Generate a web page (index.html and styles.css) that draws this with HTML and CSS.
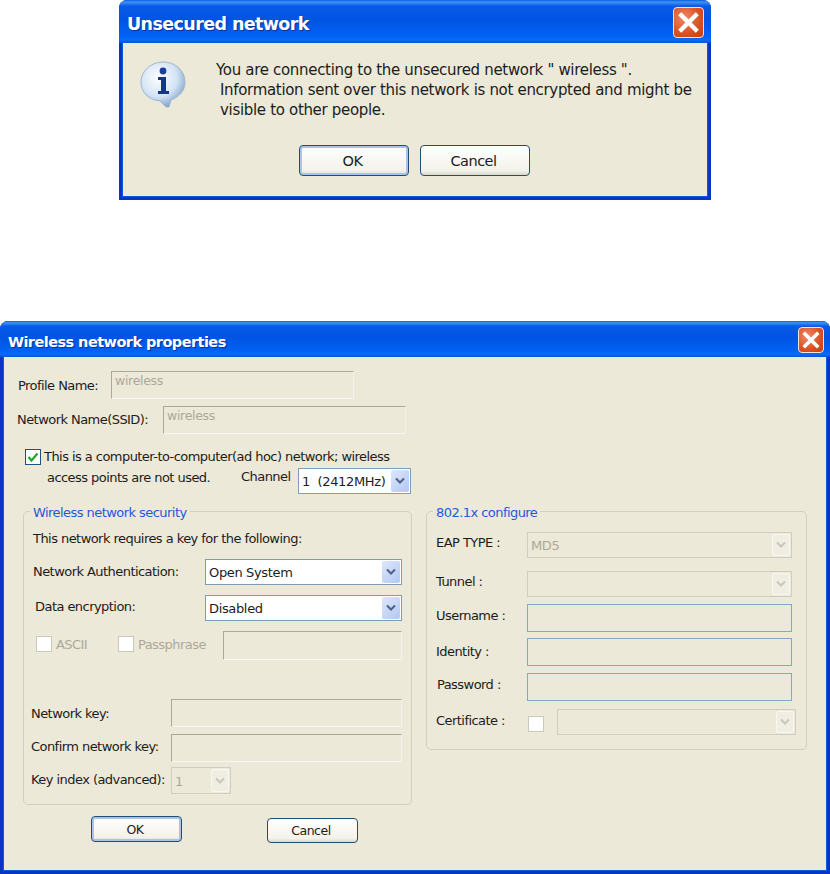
FILE: index.html
```html
<!DOCTYPE html>
<html lang="en">
<head>
  <meta charset="UTF-8" />
  <title>Wireless network dialogs</title>
  <link rel="stylesheet" href="styles.css">
</head>
<body>
  <!-- first dialog -->
  <div class="window alert">
    <div class="titlebar">
      <span class="title">Unsecured network</span>
      <div class="close"><svg viewBox="0 0 20 20"><path d="M5 5L15 15M15 5L5 15" stroke="#fff" stroke-width="3" stroke-linecap="square"/></svg></div>
    </div>
    <div class="alert-body">
      <div class="alert-main">
        <svg class="info-icon" width="50" height="50" viewBox="0 0 50 50">
          <defs>
            <radialGradient id="bubble" cx="40%" cy="35%" r="70%">
              <stop offset="0" stop-color="#ffffff"/>
              <stop offset="0.6" stop-color="#d3e3f5"/>
              <stop offset="1" stop-color="#7d9ec6"/>
            </radialGradient>
          </defs>
          <path d="M24 2C36 2 46 10 46 22C46 31 40 37 32 40L30 47L27 47L21 41C10 40 2 33 2 22C2 11 12 2 24 2Z" fill="url(#bubble)" stroke="#9fb6d2" stroke-width="1"/>
          <circle cx="24" cy="11" r="3.4" fill="#1a3f9c"/>
          <path d="M19 17H27V31H30V34H19V31H22V20H19Z" fill="#14358e"/>
        </svg>
        <div class="alert-text">
          <div class="alert-line1">You are connecting to the unsecured network " wireless ".</div>
          <div class="alert-line2">Information sent over this network is not encrypted and might be</div>
          <div class="alert-line2">visible to other people.</div>
        </div>
      </div>
      <div class="alert-buttons">
        <button class="btn btn-default btn-big">OK</button>
        <button class="btn btn-big">Cancel</button>
      </div>
    </div>
  </div>

  <!-- second dialog -->
  <div class="window props">
    <div class="titlebar">
      <span class="title">Wireless network properties</span>
      <div class="close"><svg viewBox="0 0 20 20"><path d="M5 5L15 15M15 5L5 15" stroke="#fff" stroke-width="3" stroke-linecap="square"/></svg></div>
    </div>
    <div class="props-body">
      <div class="row row-profile">
        <label class="lbl lbl-profile">Profile Name:</label>
        <input class="box box-top" disabled value="wireless">
      </div>
      <div class="row row-ssid">
        <label class="lbl lbl-ssid">Network Name(SSID):</label>
        <input class="box box-top" disabled value="wireless">
      </div>
      <div class="adhoc">
        <div class="check check-on"><svg width="12" height="12" viewBox="0 0 12 12"><path d="M1.5 6L4.5 9.5L10.5 2.5" fill="none" stroke="#22a52e" stroke-width="2.2"/></svg></div>
        <div class="adhoc-text">
          <div>This is a computer-to-computer(ad hoc) network; wireless</div>
          <div class="adhoc-second">
            <span class="adhoc-note">access points are not used.</span>
            <span class="channel-lbl">Channel</span>
            <div class="select select-channel"><span>1&nbsp; (2412MHz)</span><div class="arrow"><svg width="12" height="8" viewBox="0 0 12 8"><path d="M2 1.5L6 5.5L10 1.5" fill="none" stroke="#4d6185" stroke-width="2"/></svg></div></div>
          </div>
        </div>
      </div>

      <div class="groups">
        <div class="group group-security">
          <div class="legend">Wireless network security</div>
          <div class="sec-intro">This network requires a key for the following:</div>
          <div class="row row-auth">
            <label class="lbl lbl-auth">Network Authentication:</label>
            <div class="select select-wide"><span>Open System</span><div class="arrow"><svg width="12" height="8" viewBox="0 0 12 8"><path d="M2 1.5L6 5.5L10 1.5" fill="none" stroke="#4d6185" stroke-width="2"/></svg></div></div>
          </div>
          <div class="row row-enc">
            <label class="lbl lbl-enc">Data encryption:</label>
            <div class="select select-wide"><span>Disabled</span><div class="arrow"><svg width="12" height="8" viewBox="0 0 12 8"><path d="M2 1.5L6 5.5L10 1.5" fill="none" stroke="#4d6185" stroke-width="2"/></svg></div></div>
          </div>
          <div class="row row-pass">
            <div class="check check-off"></div>
            <span class="muted lbl-ascii">ASCII</span>
            <div class="check check-off"></div>
            <span class="muted lbl-phrase">Passphrase</span>
            <input class="box box-phrase" disabled>
          </div>
          <div class="row row-key">
            <label class="lbl lbl-key">Network key:</label>
            <input class="box box-key" disabled>
          </div>
          <div class="row row-confirm">
            <label class="lbl lbl-key">Confirm network key:</label>
            <input class="box box-key" disabled>
          </div>
          <div class="row row-index">
            <label class="lbl lbl-key">Key index (advanced):</label>
            <div class="select select-off select-index"><span>1</span><div class="arrow arrow-off"><svg width="12" height="8" viewBox="0 0 12 8"><path d="M2 1.5L6 5.5L10 1.5" fill="none" stroke="#c9c7ba" stroke-width="2"/></svg></div></div>
          </div>
        </div>

        <div class="group group-8021x">
          <div class="legend">802.1x configure</div>
          <div class="row row-eap">
            <label class="lbl lbl-x">EAP TYPE :</label>
            <div class="select select-off select-x"><span>MD5</span><div class="arrow arrow-off"><svg width="12" height="8" viewBox="0 0 12 8"><path d="M2 1.5L6 5.5L10 1.5" fill="none" stroke="#c9c7ba" stroke-width="2"/></svg></div></div>
          </div>
          <div class="row row-tunnel">
            <label class="lbl lbl-x">Tunnel :</label>
            <div class="select select-off select-x"><span></span><div class="arrow arrow-off"><svg width="12" height="8" viewBox="0 0 12 8"><path d="M2 1.5L6 5.5L10 1.5" fill="none" stroke="#c9c7ba" stroke-width="2"/></svg></div></div>
          </div>
          <div class="row row-user">
            <label class="lbl lbl-x">Username :</label>
            <input class="box box-blue" disabled>
          </div>
          <div class="row row-identity">
            <label class="lbl lbl-x">Identity :</label>
            <input class="box box-blue" disabled>
          </div>
          <div class="row row-password">
            <label class="lbl lbl-x lbl-password">Password :</label>
            <input class="box box-blue" disabled>
          </div>
          <div class="row row-cert">
            <label class="lbl lbl-x">Certificate :</label>
            <div class="check check-off check-cert"></div>
            <div class="select select-off select-cert"><span></span><div class="arrow arrow-off"><svg width="12" height="8" viewBox="0 0 12 8"><path d="M2 1.5L6 5.5L10 1.5" fill="none" stroke="#c9c7ba" stroke-width="2"/></svg></div></div>
          </div>
        </div>
      </div>

      <div class="props-buttons">
        <button class="btn btn-default btn-ok">OK</button>
        <button class="btn btn-cancel">Cancel</button>
      </div>
    </div>
  </div>
</body>
</html>
```

FILE: styles.css
```css
html, body {
  margin: 0;
  padding: 0;
  background: #fff;
}
body {
  width: 830px;
  height: 874px;
  overflow: hidden;
  font-family: "DejaVu Sans", sans-serif;
  color: #1c1c1c;
}
* {
  box-sizing: border-box;
}

/* window frame */
.window {
  background: #0835c4;
  border-radius: 8px 8px 0 0;
  padding: 0 4px 4px;
  display: flex;
  flex-direction: column;
}
.alert {
  width: 592px;
  height: 200px;
  margin-left: 119px;
}
.props {
  width: 830px;
  height: 553px;
  margin-top: 121px;
}
.titlebar {
  margin: 0 -4px;
  padding-left: 8px;
  display: flex;
  align-items: center;
  justify-content: space-between;
  border-radius: 8px 8px 0 0;
  background: linear-gradient(#0a5fe0 0, #3f94f5 5%, #0a5ae8 14%, #0054e3 45%, #0063f5 85%, #0a6af8 93%, #0a4fd0 100%);
}
.alert .titlebar {
  height: 43px;
}
.props .titlebar {
  height: 36px;
}
.title {
  color: #fff;
  font-weight: bold;
  text-shadow: 1px 1px 1px #0b2f9c;
  padding-top: 5px;
}
.alert .title {
  font-size: 17.5px;
  letter-spacing: -0.6px;
}
.props .title {
  font-size: 14.5px;
  letter-spacing: -0.55px;
}
.close {
  border: 1px solid #f4e3dc;
  border-radius: 4px;
  background: radial-gradient(circle at 35% 35%, #ee8a68, #dc4f22 60%, #c93c12);
  display: flex;
}
.close svg {
  width: 100%;
  height: 100%;
}
.alert .close {
  width: 31px;
  height: 31px;
  margin-right: 7px;
  margin-top: 2px;
}
.props .close {
  width: 26px;
  height: 26px;
  margin-right: 6px;
  margin-top: 1px;
}

/* first dialog */
.alert-body {
  flex: 1;
  background: #ece9d8;
  box-shadow: 0 0 0 1px #0a5ae0;
}
.alert-main {
  display: flex;
  padding: 17px 0 0 16px;
}
.info-icon {
  flex: none;
}
.alert-text {
  margin-left: 27px;
  font-size: 15px;
  line-height: 20px;
  letter-spacing: -0.32px;
  white-space: nowrap;
  margin-top: 0;
}
.alert-line2 {
  padding-left: 4px;
}
.alert-buttons {
  display: flex;
  gap: 11px;
  padding: 25px 0 0 176px;
}

/* buttons */
.btn {
  font-family: inherit;
  font-size: 14.5px;
  letter-spacing: -0.5px;
  color: #1c1c1c;
  border: 1px solid #1f4e79;
  border-radius: 4px;
  background: linear-gradient(#fff, #f3f2ea 85%, #dcd8c8);
  padding: 0 3px 0 0;
}
.btn-big {
  width: 110px;
  height: 31px;
}
.btn-default {
  box-shadow: inset 0 0 0 2px #a9c3ea;
}
.btn-ok {
  width: 91px;
  height: 26px;
  margin-left: 87px;
  font-size: 12.5px;
}
.btn-cancel {
  width: 91px;
  height: 25px;
  margin-left: 85px;
  margin-top: 2px;
  font-size: 12.5px;
}

/* second dialog */
.props-body {
  flex: 1;
  background: #ece9d8;
  box-shadow: 0 0 0 1px #0a5ae0;
  font-size: 13px;
  letter-spacing: -0.55px;
  white-space: nowrap;
}
.row {
  display: flex;
  align-items: center;
}
.lbl {
  flex: none;
}
.box {
  display: block;
  flex: none;
  font-family: inherit;
  font-size: 12.5px;
  letter-spacing: -0.3px;
  background: #ece9d8;
  color: #aca899;
  border: 1px solid;
  border-color: #aca899 #f4f2e8 #f8f7ef #aca899;
  padding: 0 3px 9px;
  height: 28px;
  width: 243px;
}
.row-profile {
  padding: 14px 0 0 14px;
}
.lbl-profile {
  width: 93px;
}
.row-ssid {
  padding: 7px 0 0 13px;
}
.lbl-ssid {
  width: 146px;
  margin-top: -2px;
}

.adhoc {
  display: flex;
  padding: 15px 0 0 21px;
}
.check {
  flex: none;
  width: 16px;
  height: 16px;
  background: #fff;
}
.check-on {
  border: 1px solid #1c5180;
  display: flex;
  align-items: center;
  justify-content: center;
}
.check-off {
  border: 1px solid #cac8bb;
}
.adhoc-text {
  margin-left: 3px;
  line-height: 16px;
}
.adhoc-second {
  display: flex;
  align-items: flex-start;
  margin-top: 3px;
}
.adhoc-note {
  margin-left: 3px;
  width: 194px;
  margin-top: 2px;
}
.channel-lbl {
  width: 57px;
  margin-top: 1px;
}

.select {
  display: flex;
  align-items: center;
  justify-content: space-between;
  flex: none;
  background: #fff;
  border: 1px solid #7f9db9;
  padding: 1px 1px 1px 3px;
  letter-spacing: -0.35px;
}
.select span {
  padding-top: 1px;
}
.select-channel {
  width: 113px;
  height: 26px;
}
.select-wide {
  width: 197px;
  height: 26px;
}
.arrow {
  width: 18px;
  height: 100%;
  border-radius: 2px;
  background: linear-gradient(135deg, #dde7fb, #b3c7f2);
  display: flex;
  align-items: center;
  justify-content: center;
}
.select-off {
  background: #ece9d8;
  border-color: #cfcdc0;
  color: #aca899;
}
.arrow-off {
  background: #f0eee3;
  border: 1px solid #f8f7f1;
}
.select-index {
  width: 60px;
  height: 27px;
}
.select-x {
  width: 265px;
  height: 26px;
}
.select-cert {
  width: 239px;
  height: 26px;
  margin-left: 13px;
}

/* group boxes */
.groups {
  display: flex;
  align-items: flex-start;
  padding-left: 19px;
  margin-top: 17px;
}
.group {
  position: relative;
  border: 1px solid #d0d0bf;
  border-radius: 5px;
}
.legend {
  position: absolute;
  left: 6px;
  top: -7px;
  padding: 0 3px;
  background: #ece9d8;
  color: #1f5ad8;
  line-height: 15px;
}
.group-security {
  width: 389px;
  height: 294px;
  padding: 19px 0 0 9px;
}
.group-8021x {
  width: 381px;
  height: 239px;
  margin-left: 14px;
  padding-left: 9px;
}
.sec-intro {
  line-height: 16px;
}
.row-auth {
  margin-top: 12px;
  height: 26px;
}
.lbl-auth {
  width: 172px;
  margin-top: -2px;
}
.row-enc {
  margin-top: 10px;
  height: 26px;
}
.lbl-enc {
  width: 172px;
  padding-left: 2px;
  margin-top: -4px;
}
.row-pass {
  margin-top: 9px;
  height: 30px;
  padding-left: 3px;
}
.row-pass .check {
  margin-top: -2px;
}
.muted {
  color: #aca899;
  margin-top: -1px;
}
.lbl-ascii {
  padding-left: 4px;
  width: 66px;
}
.lbl-phrase {
  padding-left: 4px;
  width: 89px;
}
.box-phrase {
  width: 179px;
  height: 29px;
}
.row-key {
  margin-top: 39px;
}
.row-confirm {
  margin-top: 7px;
}
.row-confirm .lbl {
  margin-top: -4px;
}
.row-index {
  margin-top: 5px;
}
.row-index .lbl {
  margin-top: -2px;
}
.lbl-key {
  width: 140px;
  margin-left: -2px;
  margin-right: 0;
}
.box-key {
  width: 231px;
  height: 28px;
}
.lbl-x {
  width: 91px;
  margin-top: -6px;
}
.row-identity .lbl-x {
  margin-top: -2px;
}
.lbl-password {
  padding-left: 1px;
}
.row-password .lbl-x {
  margin-top: -5px;
}
.row-cert .lbl-x {
  margin-top: -4px;
}
.row-eap {
  margin-top: 20px;
}
.row-tunnel {
  margin-top: 13px;
}
.row-user {
  margin-top: 7px;
}
.row-identity {
  margin-top: 6px;
}
.row-password {
  margin-top: 7px;
}
.row-cert {
  margin-top: 8px;
}
.box-blue {
  width: 265px;
  border-color: #8aa6c4;
}
.check-cert {
  margin-left: 1px;
  margin-top: 4px;
}
.props-buttons {
  display: flex;
  align-items: flex-start;
  margin-top: 11px;
}
```
